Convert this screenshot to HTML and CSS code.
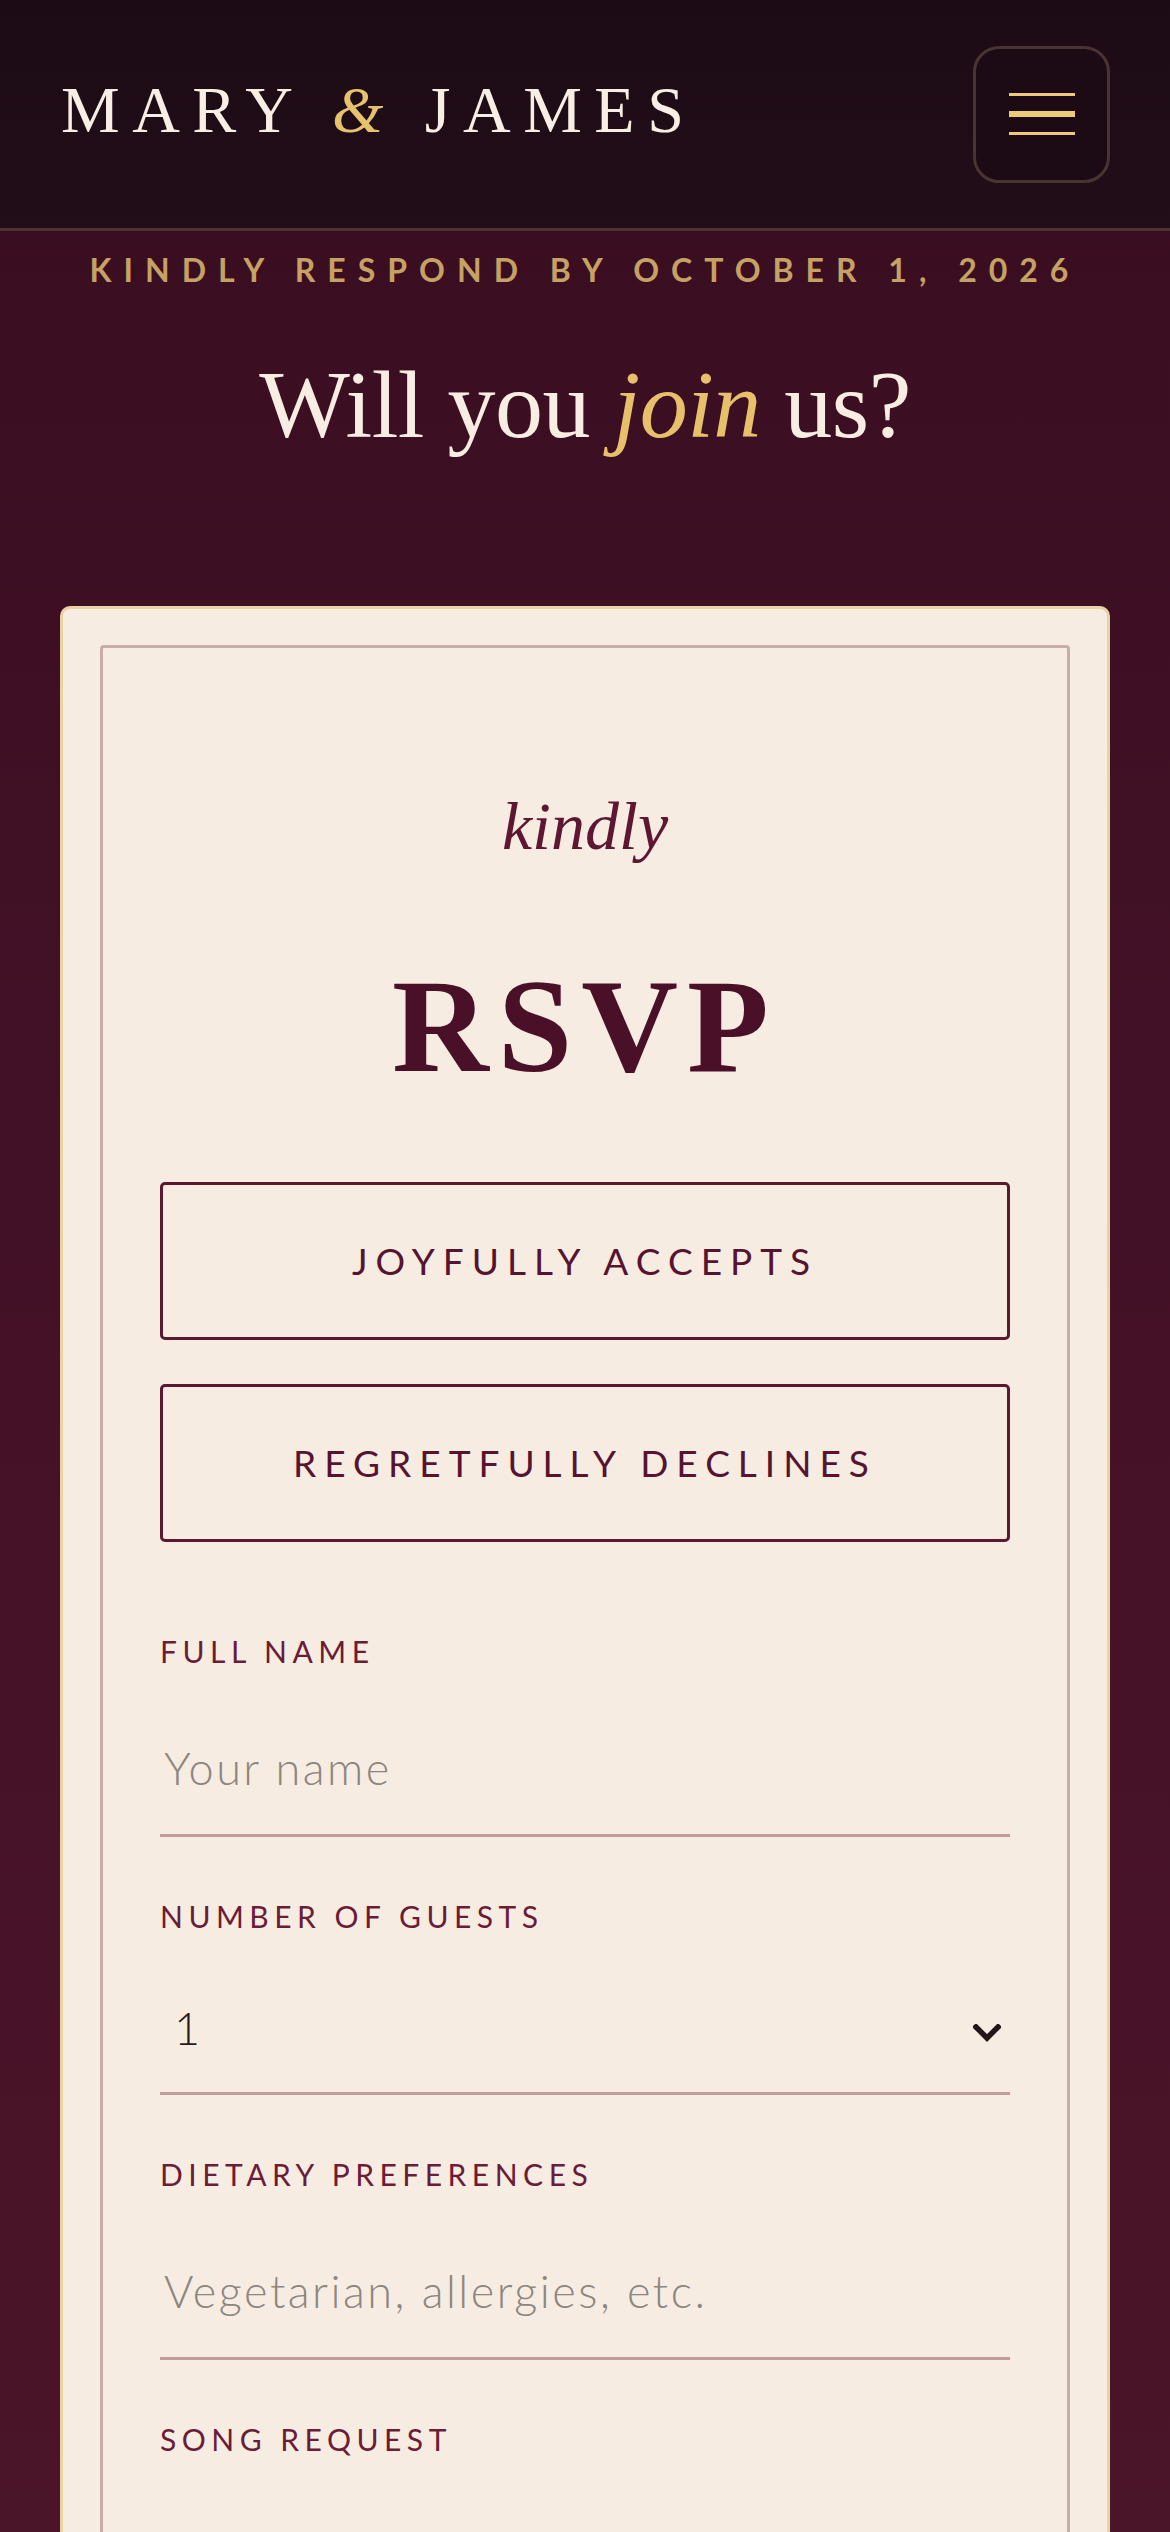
FILE: index.html
```html
<!DOCTYPE html>
<html lang="en">
<head>
<meta charset="utf-8">
<meta name="viewport" content="width=device-width, initial-scale=1">
<title>Mary &amp; James — RSVP</title>
<link rel="stylesheet" href="styles.css">
</head>
<body>
<header class="site-header">
  <div class="logo">MARY <span class="amp">&amp;</span> JAMES</div>
  <button class="menu-btn" type="button" aria-label="Open menu">
    <span class="bar bar-thin"></span>
    <span class="bar bar-thick"></span>
    <span class="bar bar-thin"></span>
  </button>
</header>
<main class="rsvp-page">
  <p class="deadline">Kindly respond by October 1, 2026</p>
  <h1 class="headline">Will you <em class="accent">join</em> us?</h1>
  <section class="card">
    <div class="card-inner">
      <p class="kindly">kindly</p>
      <h2 class="rsvp-title">RSVP</h2>
      <div class="choices">
        <button class="choice" type="button">Joyfully Accepts</button>
        <button class="choice" type="button">Regretfully Declines</button>
      </div>
      <form class="form">
        <div class="field">
          <label class="label" for="name">Full Name</label>
          <input class="input" id="name" type="text" placeholder="Your name">
        </div>
        <div class="field">
          <label class="label" for="guests">Number of Guests</label>
          <div class="select-wrap">
            <select class="select" id="guests">
              <option>1</option>
              <option>2</option>
              <option>3</option>
              <option>4</option>
            </select>
            <svg class="chevron" viewBox="0 0 28 18" width="28" height="18" aria-hidden="true">
              <path d="M3 3 L14 14 L25 3" fill="none" stroke="#231518" stroke-width="5.5" stroke-linecap="square" stroke-linejoin="miter"/>
            </svg>
          </div>
        </div>
        <div class="field">
          <label class="label" for="diet">Dietary Preferences</label>
          <input class="input" id="diet" type="text" placeholder="Vegetarian, allergies, etc.">
        </div>
        <div class="field">
          <label class="label" for="song">Song Request</label>
          <input class="input" id="song" type="text">
        </div>
        <div class="field">
          <label class="label" for="note">A Note for the Couple</label>
          <input class="input" id="note" type="text">
        </div>
        <button class="submit" type="submit">Send RSVP</button>
      </form>
    </div>
  </section>
</main>
</body>
</html>
```
FILE: styles.css
```css
html, body {
  margin: 0;
  padding: 0;
}

body {
  background: linear-gradient(180deg, #380d20 0%, #431127 35%, #4a1428 70%, #4e1629 100%);
  min-height: 100vh;
  font-family: "Lato", "Noto Sans", sans-serif;
}

/* Header */
.site-header {
  height: 228px;
  display: flex;
  align-items: center;
  justify-content: space-between;
  padding: 0 60px 0 61px;
  background: linear-gradient(180deg, #1c0a15 0%, #210e19 100%);
  border-bottom: 3px solid #4b3433;
}

.logo {
  font-family: "Liberation Serif", "Times New Roman", serif;
  font-size: 66px;
  line-height: 1;
  letter-spacing: 12.5px;
  color: #f8eee4;
  margin-bottom: 9px;
  white-space: nowrap;
}

.amp {
  font-style: italic;
  color: #e6c26c;
}

.menu-btn {
  width: 137px;
  height: 137px;
  box-sizing: border-box;
  border: 3px solid #4a3431;
  border-radius: 26px;
  background: #1c0a15;
  padding: 0;
  display: flex;
  flex-direction: column;
  align-items: center;
  justify-content: center;
  gap: 15px;
  cursor: pointer;
}

.bar {
  display: block;
  width: 66px;
  background: #ecca78;
}

.bar-thin { height: 3px; }
.bar-thick { height: 6px; }

/* Page */
.rsvp-page {
  padding: 19px 60px 120px;
  display: flex;
  flex-direction: column;
  align-items: stretch;
}

.deadline {
  margin: 0;
  text-align: center;
  font-family: "Lato", "Noto Sans", sans-serif;
  font-weight: 700;
  font-size: 32px;
  line-height: 40px;
  letter-spacing: 12px;
  text-transform: uppercase;
  color: #c5a263;
}

.headline {
  margin: 57px 0 0;
  text-align: center;
  font-family: "Liberation Serif", "Times New Roman", serif;
  font-weight: 400;
  font-size: 96px;
  line-height: 1.2;
  letter-spacing: -0.5px;
  color: #f8ede3;
}

.accent {
  font-style: italic;
  color: #e7c06c;
}

/* Card */
.card {
  margin-top: 144px;
  background: #f7ece1;
  border: 3px solid #ebd2a4;
  border-radius: 10px;
  padding: 36px 37px;
}

.card-inner {
  border: 3px solid #c9aba8;
  border-radius: 4px;
  padding: 138px 57px 80px;
  display: flex;
  flex-direction: column;
}

.kindly {
  margin: 0;
  text-align: center;
  font-family: "Liberation Serif", "Times New Roman", serif;
  font-style: italic;
  font-size: 68px;
  line-height: 1.2;
  color: #5e1733;
}

.rsvp-title {
  margin: 78px 0 0;
  text-align: center;
  font-family: "Liberation Serif", "Times New Roman", serif;
  font-weight: 700;
  font-size: 134px;
  line-height: 1.2;
  letter-spacing: 9px;
  color: #4a1028;
}

.choices {
  margin-top: 75px;
  display: flex;
  flex-direction: column;
  gap: 44px;
}

.choice {
  height: 158px;
  box-sizing: border-box;
  border: 3px solid #5c1830;
  border-radius: 5px;
  background: transparent;
  font-family: "Lato", "Noto Sans", sans-serif;
  font-weight: 400;
  font-size: 37px;
  letter-spacing: 8px;
  text-transform: uppercase;
  color: #561430;
  cursor: pointer;
}

/* Form */
.form {
  margin-top: 91px;
  display: flex;
  flex-direction: column;
  gap: 61px;
}

.field {
  display: flex;
  flex-direction: column;
}

.label {
  font-family: "Lato", "Noto Sans", sans-serif;
  font-weight: 400;
  font-size: 30px;
  line-height: 36px;
  letter-spacing: 5.5px;
  text-transform: uppercase;
  color: #6b1c37;
  margin-bottom: 24px;
}

.input {
  box-sizing: border-box;
  width: 100%;
  height: 144px;
  padding: 48px 4px 39px;
  border: none;
  border-bottom: 3px solid #c29c99;
  background: transparent;
  font-family: "Lato", "Noto Sans", sans-serif;
  font-weight: 300;
  font-size: 45px;
  line-height: 54px;
  letter-spacing: 2.5px;
  color: #2a1c1e;
  outline: none;
}

.input::placeholder {
  color: #8c8680;
  opacity: 1;
}

.select-wrap {
  position: relative;
}

.select {
  -webkit-appearance: none;
  appearance: none;
  box-sizing: border-box;
  width: 100%;
  height: 137px;
  padding: 43px 14px 37px;
  border: none;
  border-bottom: 3px solid #c29c99;
  border-radius: 0;
  background: transparent;
  font-family: "Lato", "Noto Sans", sans-serif;
  font-weight: 300;
  font-size: 45px;
  line-height: 54px;
  color: #2a1c1e;
  outline: none;
}

.chevron {
  position: absolute;
  right: 9px;
  top: 66px;
  pointer-events: none;
}

.submit {
  margin-top: 20px;
  height: 158px;
  border: none;
  border-radius: 5px;
  background: #5c1830;
  color: #f7ece1;
  font-family: "Lato", "Noto Sans", sans-serif;
  font-size: 37px;
  letter-spacing: 8px;
  text-transform: uppercase;
}
```
